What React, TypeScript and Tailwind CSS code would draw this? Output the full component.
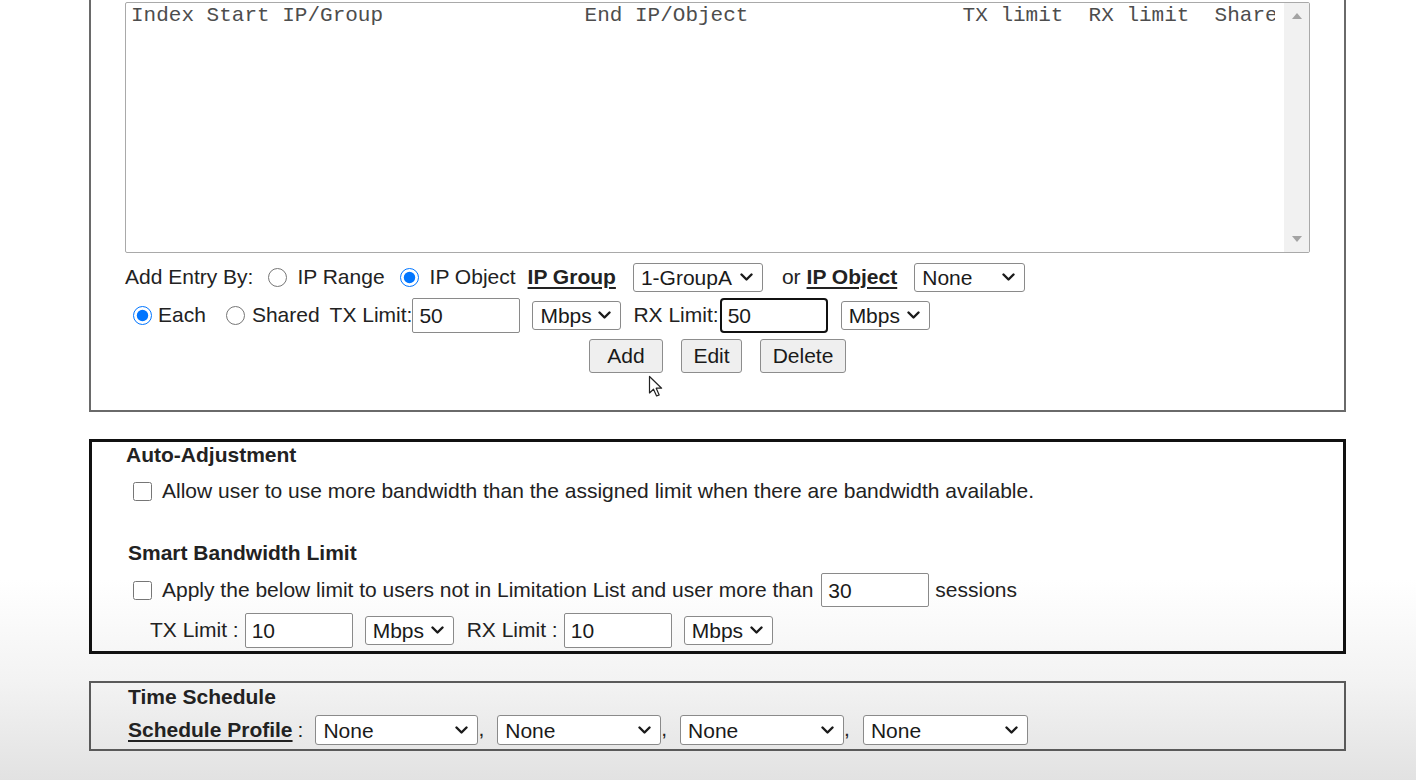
import React from 'react';

const sans = "font-['Liberation_Sans',Arial,sans-serif]";

function Chevron() {
    return (
        <svg width="13" height="9" viewBox="0 0 13 9" className="shrink-0">
            <path d="M1.5 1.5 L6.5 6.5 L11.5 1.5" fill="none" stroke="#1a1a1a" strokeWidth="2.4" strokeLinecap="round" strokeLinejoin="round" />
        </svg>
    );
}

function Select({ text, className }: { text: string; className: string }) {
    return (
        <div className={`flex items-center justify-between border border-[#8a8a8a] rounded-[3px] bg-white pl-[7px] pr-[9px] text-[21px] leading-none text-[#1a1a1a] ${className}`}>
            <span>{text}</span>
            <Chevron />
        </div>
    );
}

function TextBox({ value, className }: { value: string; className: string }) {
    return (
        <div className={`flex items-center rounded-[2px] bg-white pl-[6px] text-[21px] leading-none text-[#1a1a1a] ${className}`}>
            {value}
        </div>
    );
}

function Radio({ checked, className = '' }: { checked?: boolean; className?: string }) {
    return (
        <input
            type="radio"
            readOnly
            checked={!!checked}
            className={`m-0 w-[19px] h-[19px] shrink-0 accent-[#0075ff] ${className}`}
        />
    );
}

function Check({ className = '' }: { className?: string }) {
    return <input type="checkbox" readOnly checked={false} className={`m-0 w-[19px] h-[19px] shrink-0 ${className}`} />;
}

function Btn({ label, className }: { label: string; className: string }) {
    return (
        <div className={`flex items-center justify-center h-[34px] bg-[#efefef] border border-[#8d8d8d] rounded-[3px] text-[21px] text-[#1a1a1a] ${className}`}>
            {label}
        </div>
    );
}

export default function App() {
    return (
        <div className={`${sans} w-[1416px] h-[780px] overflow-hidden text-[#222] bg-[linear-gradient(to_bottom,#ffffff_0px,#ffffff_580px,#f3f3f3_680px,#e2e2e2_780px)]`}>
            {/* Bandwidth limit list panel */}
            <div className="relative ml-[89px] w-[1257px] h-[412px] border-x-2 border-b-2 border-[#6a6a6a] pt-[2px] pl-[34px]">
                <div className="flex w-[1185px] h-[251px] border border-[#a9a9a9] rounded-[2px] bg-white overflow-hidden">
                    <div className="flex-1 overflow-hidden pl-[5px] pt-[1px]">
                        <div className="flex font-['Liberation_Mono','Courier_New',monospace] text-[21px] leading-[24px] text-[#4d4d4d] whitespace-pre">
                            <span className="w-[453.6px] shrink-0">Index Start IP/Group</span>
                            <span className="w-[378px] shrink-0">End IP/Object</span>
                            <span className="w-[126px] shrink-0">TX limit</span>
                            <span className="w-[126px] shrink-0">RX limit</span>
                            <span className="w-[60px] shrink-0 overflow-hidden">Shared</span>
                        </div>
                    </div>
                    <div className="flex flex-col justify-between items-center w-[25px] bg-[#f1f1f1] py-[10px]">
                        <svg width="10" height="6" viewBox="0 0 10 6"><path d="M0 6 L5 0 L10 6 Z" fill="#a3a3a3" /></svg>
                        <svg width="10" height="6" viewBox="0 0 10 6"><path d="M0 0 L5 6 L10 0 Z" fill="#a3a3a3" /></svg>
                    </div>
                </div>

                {/* Add entry by */}
                <div className="flex items-center h-[32px] mt-[8px] text-[21px]">
                    <span>Add Entry By:</span>
                    <Radio className="ml-[15px]" />
                    <span className="ml-[10px]">IP Range</span>
                    <Radio checked className="ml-[15px]" />
                    <span className="ml-[11px]">IP Object</span>
                    <span className="ml-[12px] font-bold underline underline-offset-[3px]">IP Group</span>
                    <Select text="1-GroupA" className="ml-[17px] w-[130px] h-[29px]" />
                    <span className="ml-[19px]">or</span>
                    <span className="ml-[6px] font-bold underline underline-offset-[3px]">IP Object</span>
                    <Select text="None" className="ml-[17px] w-[111px] h-[29px]" />
                </div>

                {/* Each / shared + limits */}
                <div className="flex items-center h-[36px] mt-[4px] text-[21px]">
                    <Radio checked className="ml-[8px]" />
                    <span className="ml-[6px]">Each</span>
                    <Radio className="ml-[20px]" />
                    <span className="ml-[7px]">Shared</span>
                    <span className="ml-[10px]">TX Limit:</span>
                    <TextBox value="50" className="ml-[0px] w-[108px] h-[35px] border border-[#8a8a8a]" />
                    <Select text="Mbps" className="ml-[12px] w-[89px] h-[29px]" />
                    <span className="ml-[12px]">RX Limit:</span>
                    <TextBox value="50" className="ml-[1px] w-[108px] h-[35px] border-2 border-[#111] rounded-[4px] pl-[5px]" />
                    <Select text="Mbps" className="ml-[13px] w-[89px] h-[29px]" />
                </div>

                {/* Buttons */}
                <div className="flex justify-center gap-[18px] mt-[6px] -ml-[34px]">
                    <Btn label="Add" className="w-[74px]" />
                    <Btn label="Edit" className="w-[61px]" />
                    <Btn label="Delete" className="w-[86px]" />
                </div>

                {/* mouse pointer */}
                <svg width="16" height="23" viewBox="0 0 16 23" className="absolute left-[557px] top-[375px]">
                    <path d="M1.5 1.5 L1.5 18 L5.5 14.2 L8.6 21 L11.2 19.9 L8.2 13.2 L13.6 13.2 Z" fill="#fff" stroke="#222" strokeWidth="1.2" strokeLinejoin="round" />
                </svg>
            </div>

            {/* Auto adjustment + smart bandwidth */}
            <div className="ml-[89px] mt-[27px] w-[1257px] h-[215px] border-[3px] border-[#111] pl-[34px] pt-[1px] text-[21px]">
                <div className="h-[24px] leading-[24px] font-bold">Auto-Adjustment</div>
                <div className="flex items-center h-[24px] mt-[12px]">
                    <Check className="ml-[7px]" />
                    <span className="ml-[10px]">Allow user to use more bandwidth than the assigned limit when there are bandwidth available.</span>
                </div>
                <div className="h-[24px] leading-[24px] font-bold mt-[38px] ml-[2px]">Smart Bandwidth Limit</div>
                <div className="flex items-center h-[36px] mt-[7px]">
                    <Check className="ml-[7px]" />
                    <span className="ml-[10px]">Apply the below limit to users not in Limitation List and user more than</span>
                    <TextBox value="30" className="ml-[8px] w-[108px] h-[34px] border border-[#8a8a8a]" />
                    <span className="ml-[6px]">sessions</span>
                </div>
                <div className="flex items-center h-[36px] mt-[4px]">
                    <span className="ml-[24px]">TX Limit :</span>
                    <TextBox value="10" className="ml-[6px] w-[108px] h-[35px] border border-[#8a8a8a]" />
                    <Select text="Mbps" className="ml-[12px] w-[89px] h-[29px]" />
                    <span className="ml-[13px]">RX Limit :</span>
                    <TextBox value="10" className="ml-[6px] w-[108px] h-[35px] border border-[#8a8a8a]" />
                    <Select text="Mbps" className="ml-[12px] w-[89px] h-[29px]" />
                </div>
            </div>

            {/* Time schedule */}
            <div className="ml-[89px] mt-[27px] w-[1257px] h-[70px] border-2 border-[#5a5a5a] pl-[37px] pt-[2px] text-[21px]">
                <div className="h-[24px] leading-[24px] font-bold">Time Schedule</div>
                <div className="flex items-center h-[32px] mt-[5px]">
                    <span className="font-bold underline underline-offset-[3px]">Schedule Profile</span>
                    <span className="ml-[5px]">:</span>
                    <Select text="None" className="ml-[12px] w-[163px] h-[30px]" />
                    <span className="self-end mb-[2px]">,</span>
                    <Select text="None" className="ml-[13px] w-[164px] h-[30px]" />
                    <span className="self-end mb-[2px]">,</span>
                    <Select text="None" className="ml-[13px] w-[164px] h-[30px]" />
                    <span className="self-end mb-[2px]">,</span>
                    <Select text="None" className="ml-[13px] w-[165px] h-[30px]" />
                </div>
            </div>
        </div>
    );
}
